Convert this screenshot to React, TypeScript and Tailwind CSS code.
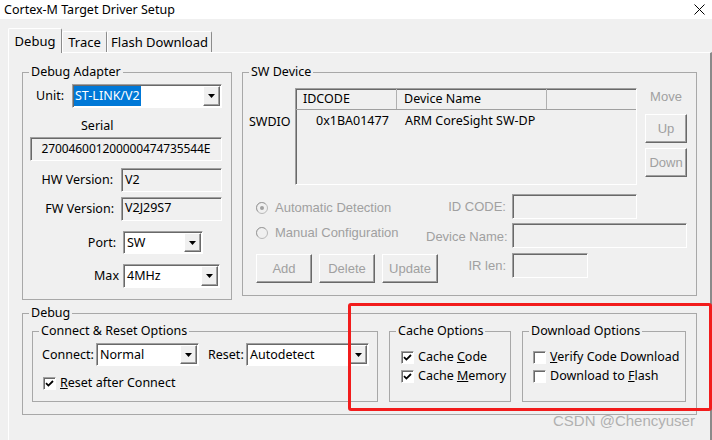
import React from 'react';

const sunken =
  'border border-t-[#a0a0a0] border-l-[#a0a0a0] border-r-white border-b-white shadow-[inset_1px_1px_0_#696969]';
const raised =
  'border border-t-white border-l-white border-r-[#696969] border-b-[#696969] shadow-[inset_-1px_-1px_0_#a0a0a0]';
const dim = "font-['Liberation_Sans',sans-serif] text-[13px] text-[#a0a0a0]";

const Arrow = () => (
  <svg width="7" height="4" viewBox="0 0 7 4">
    <path d="M0 0h7L3.5 4z" fill="#000" />
  </svg>
);

function Combo({ className, value, sel }: { className: string; value: string; sel?: boolean }) {
  return (
    <div className={`${sunken} ${className} bg-white flex items-stretch p-[1px]`}>
      <div className="flex-1 flex items-center min-w-0">
        {sel ? (
          <span className="bg-[#0078d7] text-white h-full flex items-center px-[1px]">{value}</span>
        ) : (
          <span className="pl-[2px]">{value}</span>
        )}
      </div>
      <div className={`${raised} bg-[#f0f0f0] w-[17px] flex items-center justify-center`}>
        <Arrow />
      </div>
    </div>
  );
}

function Group({ label, className, children }: { label: string; className: string; children?: React.ReactNode }) {
  return (
    <fieldset className={`border border-[#a8a8a8] p-0 m-0 min-w-0 ${className}`}>
      <legend className="ml-[6px] px-[2px] h-[16px] leading-[16px]">{label}</legend>
      {children}
    </fieldset>
  );
}

function Check({ checked, children }: { checked?: boolean; children: React.ReactNode }) {
  return (
    <div className="flex items-center h-[16px] gap-[4px] whitespace-nowrap">
      <div className={`${sunken} w-[13px] h-[13px] bg-white flex items-center justify-center`}>
        {checked && (
          <svg width="9" height="9" viewBox="0 0 9 9">
            <path d="M1 4.2L3.4 6.6L8 2" stroke="#000" strokeWidth="1.8" fill="none" />
          </svg>
        )}
      </div>
      <span>{children}</span>
    </div>
  );
}

function Radio({ on, label }: { on?: boolean; label: string }) {
  return (
    <div className={`flex items-center gap-[7px] h-[16px] ${dim}`}>
      <svg width="12" height="12" viewBox="0 0 12 12">
        <circle cx="6" cy="6" r="5.5" fill="#f0f0f0" stroke="#b8b8b8" />
        <path d="M2 9.5A5 5 0 0 1 9.5 2" stroke="#a0a0a0" fill="none" />
        {on && <circle cx="6" cy="6" r="2" fill="#a0a0a0" />}
      </svg>
      <span>{label}</span>
    </div>
  );
}

function Btn({ label, className }: { label: string; className: string }) {
  return (
    <div className={`${raised} ${dim} bg-[#f0f0f0] flex items-center justify-center ${className}`}>{label}</div>
  );
}

function Tab({ label, active, className }: { label: string; active?: boolean; className: string }) {
  return (
    <div
      className={`border-l border-t border-white border-r border-r-[#8c8c8c] rounded-t-[2px] bg-[#f0f0f0] flex items-center justify-center text-[13px] ${
        active ? 'h-[25px] -mb-[1px] relative z-10' : 'h-[21px]'
      } ${className}`}
    >
      {label}
    </div>
  );
}

export default function App() {
  return (
    <div className="w-[712px] h-[440px] bg-[#f0f0f0] overflow-hidden relative font-['Noto_Sans',sans-serif] text-[12.5px] leading-[16px] text-black">
      {/* title bar */}
      <div className="h-[19px] bg-white flex items-center justify-between pl-[4px] pr-[7px]">
        <span className="text-[12.5px]">Cortex-M Target Driver Setup</span>
        <svg width="11" height="11" viewBox="0 0 11 11">
          <path d="M0.5 0.5L10.5 10.5M10.5 0.5L0.5 10.5" stroke="#000" strokeWidth="1" />
        </svg>
      </div>

      <div className="pl-[8px] pt-[9px]">
        <div className="flex items-end h-[24px]">
          <Tab label="Debug" active className="w-[54px]" />
          <Tab label="Trace" className="w-[45px]" />
          <Tab label="Flash Download" className="w-[105px]" />
        </div>

        <div className="w-[704px] h-[400px] border-l border-t border-white border-r-2 border-r-[#8a8a8a]">
          <div className="flex items-start pl-[13px] pt-[11px] gap-[10px]">
            {/* Debug Adapter */}
            <Group label="Debug Adapter" className="w-[210px] h-[236px]">
              <div className="flex items-center mt-[4px]">
                <span className="w-[41px] text-right">Unit:</span>
                <Combo className="ml-[8px] w-[150px] h-[24px]" value="ST-LINK/V2" sel />
              </div>
              <div className="mt-[10px] ml-[58px]">Serial</div>
              <div className={`${sunken} mt-[3px] ml-[7px] w-[192px] h-[24px] flex items-center justify-center text-[12px] tracking-[-0.1px]`}>
                270046001200000474735544E
              </div>
              <div className="flex items-center mt-[7px]">
                <span className="w-[90px] text-right">HW Version:</span>
                <div className={`${sunken} ml-[8px] w-[101px] h-[24px] flex items-center pl-[3px]`}>V2</div>
              </div>
              <div className="flex items-center mt-[5px]">
                <span className="w-[91px] text-right">FW Version:</span>
                <div className={`${sunken} ml-[7px] w-[101px] h-[24px] flex items-start pt-[2px] pl-[3px]`}>V2J29S7</div>
              </div>
              <div className="flex items-center mt-[10px]">
                <span className="w-[93px] text-right">Port:</span>
                <Combo className="ml-[7px] w-[80px] h-[23px]" value="SW" />
              </div>
              <div className="flex items-center mt-[10px]">
                <span className="w-[96px] text-right">Max</span>
                <Combo className="ml-[4px] w-[97px] h-[24px]" value="4MHz" />
              </div>
            </Group>

            {/* SW Device */}
            <Group label="SW Device" className="w-[455px] h-[232px]">
              <div className="flex items-start mt-[8px]">
                <div className="w-[52px] pl-[6px] mt-[26px]">SWDIO</div>
                <div className={`${sunken} w-[342px] h-[97px] bg-[#f0f0f0]`}>
                  <div className="flex h-[21px] border-b border-[#a0a0a0]">
                    <div className="w-[101px] border-r border-[#b0b0b0] flex items-center pl-[7px]">IDCODE</div>
                    <div className="w-[150px] border-r border-[#b0b0b0] flex items-center pl-[7px]">Device Name</div>
                    <div className="flex-1" />
                  </div>
                  <div className="flex h-[22px] items-center">
                    <div className="w-[101px] pl-[20px]">0x1BA01477</div>
                    <div className="pl-[8px]">ARM CoreSight SW-DP</div>
                  </div>
                </div>
                <div className="ml-[8px] w-[42px] flex flex-col">
                  <div className={`${dim} text-center mt-[1px] h-[16px] leading-[16px]`}>Move</div>
                  <Btn label="Up" className="mt-[9px] h-[29px]" />
                  <Btn label="Down" className="mt-[5px] h-[29px]" />
                </div>
              </div>

              <div className="flex items-start mt-[9px]">
                <div className="ml-[13px] w-[170px] flex flex-col">
                  <div className="mt-[6px]">
                    <Radio on label="Automatic Detection" />
                  </div>
                  <div className="mt-[9px]">
                    <Radio label="Manual Configuration" />
                  </div>
                  <div className="flex gap-[7px] mt-[13px]">
                    <Btn label="Add" className="w-[56px] h-[29px] shrink-0" />
                    <Btn label="Delete" className="w-[56px] h-[29px] shrink-0" />
                    <Btn label="Update" className="w-[56px] h-[29px] shrink-0" />
                  </div>
                </div>
                <div className={`flex flex-col gap-[5px] ${dim}`}>
                  <div className="flex items-center h-[25px]">
                    <span className="w-[80px] text-right whitespace-nowrap">ID CODE:</span>
                    <div className={`${sunken} ml-[6px] w-[125px] h-[25px]`} />
                  </div>
                  <div className="flex items-center h-[25px] mt-[-1px]">
                    <span className="w-[80px] text-right whitespace-nowrap pt-[2px]">Device Name:</span>
                    <div className={`${sunken} ml-[6px] w-[175px] h-[25px]`} />
                  </div>
                  <div className="flex items-center h-[25px]">
                    <span className="w-[80px] text-right whitespace-nowrap">IR len:</span>
                    <div className={`${sunken} ml-[6px] w-[76px] h-[25px]`} />
                  </div>
                </div>
              </div>
            </Group>
          </div>

          {/* Debug */}
          <div className="pl-[13px] mt-[5px]">
            <Group label="Debug" className="w-[675px] h-[110px]">
              <div className="flex items-start mt-[2px] ml-[9px] gap-[11px]">
                <Group label="Connect & Reset Options" className="w-[346px] h-[79px]">
                  <div className="flex items-center mt-[4px] ml-[9px]">
                    <span className="w-[54px]">Connect:</span>
                    <Combo className="w-[103px] h-[23px]" value="Normal" />
                    <span className="ml-[9px] w-[38px]">Reset:</span>
                    <Combo className="w-[123px] h-[23px]" value="Autodetect" />
                  </div>
                  <div className="mt-[9px] ml-[10px]">
                    <Check checked>
                      <u>R</u>eset after Connect
                    </Check>
                  </div>
                </Group>
                <Group label="Cache Options" className="w-[122px] h-[79px]">
                  <div className="ml-[11px] mt-[10px]">
                    <Check checked>
                      Cache <u>C</u>ode
                    </Check>
                  </div>
                  <div className="ml-[11px] mt-[3px]">
                    <Check checked>
                      Cache <u>M</u>emory
                    </Check>
                  </div>
                </Group>
                <Group label="Download Options" className="w-[164px] h-[79px] overflow-hidden">
                  <div className="ml-[10px] mt-[10px]">
                    <Check>
                      <u>V</u>erify Code Download
                    </Check>
                  </div>
                  <div className="ml-[10px] mt-[3px]">
                    <Check>
                      Download to <u>F</u>lash
                    </Check>
                  </div>
                </Group>
              </div>
            </Group>
          </div>
        </div>
      </div>

      {/* annotation + watermark */}
      <div className="absolute left-[348px] top-[303px] w-[364px] h-[108px] border-[3px] border-[#f21c1c] rounded-[3px]" />
      <div className="absolute left-[553px] top-[412px] font-['Liberation_Sans',sans-serif] text-[15px] leading-[18px] text-[#b0b0b0]">
        CSDN @Chencyuser
      </div>
    </div>
  );
}
